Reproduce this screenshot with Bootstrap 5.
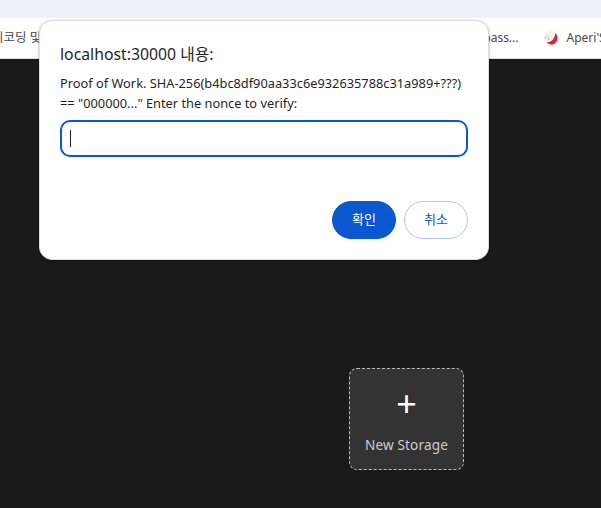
<!doctype html>
<html lang="ko">
<head>
<meta charset="utf-8">
<title>localhost</title>
<link href="https://cdn.jsdelivr.net/npm/bootstrap@5.3.0/dist/css/bootstrap.min.css" rel="stylesheet">
<style>
html,body{height:100%}
body{background:#1a1a1a;overflow:hidden;font-family:"Noto Sans","Noto Sans CJK KR",sans-serif;position:relative}
.tab-strip{height:18px;background:#edf1fa}
.mark-bar{height:41px;background:#fff;border-bottom:1px solid #dfe1e5;font-size:12px;color:#474747;white-space:nowrap;overflow:hidden}
.mark-left{margin-left:-8px;font-size:12.5px}
.mark-mid{margin-left:442px}
.mark-right{margin-left:25px}
.page-area{height:449px;padding:309px 137px 0 0}
.add-tile{width:115px;height:102px;background:#333;border:1px dashed #bbb;border-radius:8px;color:#ccc}
.add-plus{color:#fff;font-size:36px;line-height:30px;font-weight:400}
.add-name{font-size:13.6px;line-height:18px;margin-top:17px;letter-spacing:.15px}
.add-stack{margin-top:4px}
.prompt-box{position:absolute;left:39px;top:20px;width:450px;height:240px;background:#fff;border:1px solid #dcdcdc;border-radius:13px;padding:20px;box-shadow:0 1px 3px rgba(0,0,0,.35);color:#1f1f1f}
.prompt-title{font-size:15.8px;line-height:24px;margin:1px 0 7px;font-weight:400}
.prompt-msg{font-size:12.8px;line-height:20px;margin:0 0 7px}
.prompt-field{height:37px;border:2px solid #0b57d0;border-radius:10px;padding:0 8px;display:flex;align-items:center}
.prompt-caret{width:1px;height:17px;background:#1f1f1f}
.prompt-actions{margin-top:44px}
.pill-ok,.pill-no{height:38px;border-radius:19px;font-size:13px;padding:0;display:flex;align-items:center;justify-content:center;width:64px}
.pill-ok{background:#0b57d0;border:1px solid #0b57d0;color:#fff}
.pill-no{background:#fff;border:1px solid #a8c7fa;color:#0b57d0}
</style>
</head>
<body>
<div class="tab-strip"></div>
<div class="mark-bar d-flex align-items-center">
  <span class="mark-left">리코딩 및</span>
  <span class="mark-mid">pass...</span>
  <span class="mark-right d-flex align-items-center gap-2">
    <svg width="15" height="15" viewBox="0 0 15 15" aria-hidden="true"><circle cx="7.500" cy="7.500" r="7.500" fill="#f4f1f1"/><path d="M3 11C7 11.500 10.500 8 11.500 2 15 5.500 14 11 10 13 7.500 14.300 4.500 13.500 3 11Z" fill="#cf2a36"/><circle cx="1.800" cy="6.500" r=".7" fill="#aaa"/><circle cx="4" cy="5" r=".7" fill="#bbb"/><circle cx="4.500" cy="8" r=".7" fill="#999"/></svg>
    <span>Aperi'S</span>
  </span>
</div>
<div class="page-area d-flex justify-content-end align-items-start">
  <div class="add-tile d-flex flex-column align-items-center justify-content-center">
    <div class="add-stack d-flex flex-column align-items-center">
      <div class="add-plus">+</div>
      <div class="add-name">New Storage</div>
    </div>
  </div>
</div>
<div class="prompt-box">
  <h1 class="prompt-title">localhost:30000 내용:</h1>
  <p class="prompt-msg">Proof of Work. SHA-256(b4bc8df90aa33c6e932635788c31a989+???)<br>== "000000..." Enter the nonce to verify:</p>
  <div class="prompt-field"><span class="prompt-caret"></span></div>
  <div class="prompt-actions d-flex justify-content-end gap-2">
    <button type="button" class="btn pill-ok">확인</button>
    <button type="button" class="btn pill-no">취소</button>
  </div>
</div>
<script src="https://cdn.jsdelivr.net/npm/bootstrap@5.3.0/dist/js/bootstrap.bundle.min.js"></script>
</body>
</html>
